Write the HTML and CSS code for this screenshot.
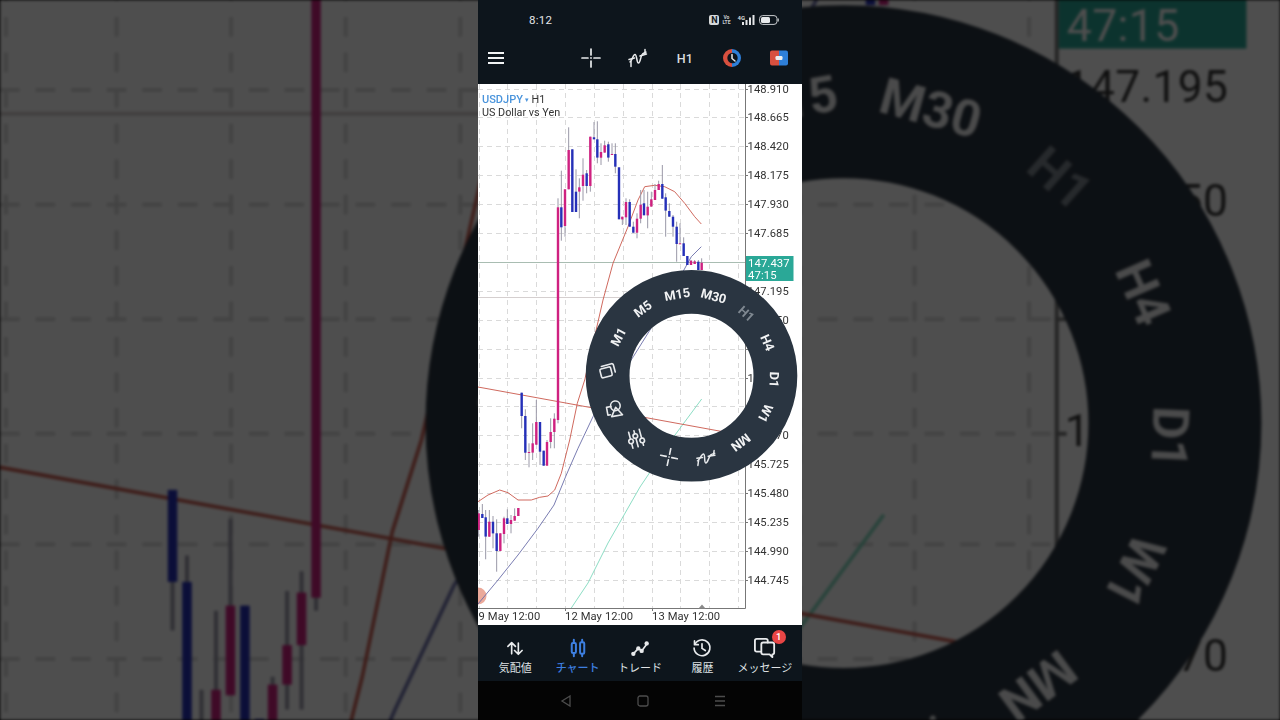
FILE: index.html
```html
<!DOCTYPE html>
<html lang="ja">
<head>
<meta charset="utf-8">
<title>USDJPY H1</title>
<link rel="stylesheet" href="styles.css">
</head>
<body>
<svg class="defs" width="0" height="0" aria-hidden="true">
  <symbol id="ico-cross" viewBox="0 0 20 20">
    <path class="ln" d="M10 1v6M10 13v6M1 10h6M13 10h6"/>
    <circle class="dot" cx="10" cy="10" r=".9"/>
  </symbol>
  <symbol id="ico-ind" viewBox="0 0 20 20">
    <path class="ln thin" d="M2 14c2-1 3-7.500 5-7.500s1.500 8.500 3.500 8.500 2-7.500 4-9l3.500-2"/>
    <path class="ln thin" d="M1 11.500l5.500-1.500M12 8l6.500-2M3 13.500v5M17 1.500v5"/>
  </symbol>
</svg>

<main class="stage">
  <svg class="backdrop" viewBox="478 268.7 324 182.25" aria-hidden="true"><use href="#scene"/></svg>

  <section class="phone">
    <header class="status">
      <span class="clock">8:12</span>
      <div class="status-icons">
        <span class="nfc">N</span>
        <span class="volte">Vo<br>LTE</span>
        <span class="net">4G</span>
        <svg class="bars" viewBox="0 0 13 10"><path d="M0 7h2v3H0zM3.500 5h2v5h-2zM7 2.500h2V10H7zM10.500 0h2v10h-2z"/></svg>
        <svg class="battery" viewBox="0 0 20 10"><rect class="batt-case" x=".6" y=".6" width="17.400" height="8.800" rx="3"/><rect class="batt-fill" x="2" y="2" width="9" height="6" rx="1.500"/><rect class="batt-tip" x="18.600" y="3.500" width="1.200" height="3"/></svg>
      </div>
    </header>

    <nav class="toolbar">
      <div class="burger"><i></i><i></i><i></i></div>
      <div class="tools">
        <svg class="tool"><use href="#ico-cross"/></svg>
        <svg class="tool"><use href="#ico-ind"/></svg>
        <span class="tf">H1</span>
        <svg class="tool" viewBox="0 0 20 20">
          <path class="f-red" d="M10 1a9 9 0 0 0 0 18z"/>
          <path class="f-blue" d="M10 1a9 9 0 0 1 0 18z"/>
          <circle class="f-dark" cx="10.500" cy="10" r="5.200"/>
          <path class="ln thin" d="M10 6.500v4l3 2.500"/>
        </svg>
        <svg class="tool" viewBox="0 0 20 20">
          <path class="f-red" d="M3 2.500h7v15H3a2 2 0 0 1-2-2v-11a2 2 0 0 1 2-2z"/>
          <path class="f-blue" d="M10 2.500h7a2 2 0 0 1 2 2v11a2 2 0 0 1-2 2h-7z"/>
          <rect class="f-white" x="6.500" y="8" width="7" height="4" rx="1.200"/>
        </svg>
      </div>
    </nav>

    <svg class="chart" viewBox="478 84 324 541">
      <g id="scene">
        <rect class="paper" x="478" y="84" width="324" height="541"/>
        <g id="grid"></g>
        <circle class="touch" cx="478" cy="596" r="8.500"/>
        <path class="hline hline-a" d="M478 262.500H745"/>
        <path class="hline hline-b" d="M478 297.500H745"/>
        <polyline class="ma red" points="478,501.700 488,495 499.700,490 508,492.700 518,500 531.300,500 539.700,497.300 548,496 554.700,490 561.300,473.300 569.700,440 577.300,403.300 584.700,380 603,300 613,263.300 628,226.700 638,200 644.700,186.700 654.700,185.300 664.700,186.700 674.700,191.700 684.700,203.300 694.700,216.700 701.300,224"/>
        <polyline class="ma blue" points="478,604 498,580 518,555 538,528.300 554,505 566.300,475 578,448.300 593,416.700 633.300,356.700 650,330 680,277 691.300,256.700 701.300,246.700"/>
        <polyline class="ma green" points="571.300,608 588,583 608,543 640,487 675,435 701.700,399"/>
        <path class="ma red" d="M478 387L722 431.500"/>
        <g id="candles"></g>
        <path class="axis" d="M745.500 84V608.500H478"/>
        <path class="marker" d="M698.500 608.500l3.500-4 3.500 4z"/>
        <g id="prices"></g>
        <rect class="tag" x="746" y="256" width="47.500" height="25"/>
        <text class="tag-text" x="748" y="266.500">147.437</text>
        <text class="tag-text" x="748" y="279">47:15</text>
        <text class="axis-text" x="478.500" y="620">9 May 12:00</text>
        <text class="axis-text" x="565" y="620">12 May 12:00</text>
        <text class="axis-text" x="652" y="620">13 May 12:00</text>
        <text class="symbol" x="482" y="102.500">USDJPY</text>
        <text class="caret" x="524.500" y="101.500">▾</text>
        <text class="head" x="531.500" y="102.500">H1</text>
        <text class="head" x="482" y="115.500">US Dollar vs Yen</text>

        <circle class="ring" cx="691.500" cy="375.800" r="83.900"/>
        <g class="ring-labels">
          <text x="691.500" y="297.500" transform="rotate(-62 691.500 375.800)">M1</text>
          <text x="691.500" y="297.500" transform="rotate(-36 691.500 375.800)">M5</text>
          <text x="691.500" y="297.500" transform="rotate(-10 691.500 375.800)">M15</text>
          <text x="691.500" y="297.500" transform="rotate(15.500 691.500 375.800)">M30</text>
          <text class="dim" x="691.500" y="297.500" transform="rotate(41.500 691.500 375.800)">H1</text>
          <text x="691.500" y="297.500" transform="rotate(66.500 691.500 375.800)">H4</text>
          <text x="691.500" y="297.500" transform="rotate(92.500 691.500 375.800)">D1</text>
          <text x="691.500" y="297.500" transform="rotate(117 691.500 375.800)">W1</text>
          <text x="691.500" y="297.500" transform="rotate(143.500 691.500 375.800)">MN</text>
        </g>
        <g transform="translate(607.500 372) rotate(-15)">
          <rect class="ln ring-ln" x="-7" y="-4.500" width="11" height="9" rx="1.500"/>
          <path class="ln ring-ln" d="M-4.500 -7H6a1.500 1.500 0 0 1 1.500 1.500V2"/>
        </g>
        <g transform="translate(614.500 409.500) rotate(-10)">
          <circle class="ln ring-ln" cx="1.500" cy="-3.500" r="4.800"/>
          <path class="ln ring-ln" d="M1.500 -2L7 6.500H-4z"/>
          <path class="ln ring-ln" d="M-3 -3.500H-7.500V4.500H-5"/>
        </g>
        <g transform="translate(636 438.500) rotate(-15)">
          <path class="ln ring-ln" d="M-5.500 -8V-1M-5.500 4V8.500M0 -8V-5M0 0V8.500M5.500 -8V1M5.500 6V8.500"/>
          <circle class="ln ring-ln" cx="-5.500" cy="1.500" r="2.300"/>
          <circle class="ln ring-ln" cx="0" cy="-2.500" r="2.300"/>
          <circle class="ln ring-ln" cx="5.500" cy="3.500" r="2.300"/>
        </g>
        <g transform="translate(669 457) rotate(12)"><use href="#ico-cross" x="-9.500" y="-9.500" width="19" height="19"/></g>
        <g transform="translate(706 458) rotate(8)"><use href="#ico-ind" x="-10" y="-10" width="20" height="20"/></g>
      </g>
    </svg>

    <nav class="tabs">
      <a class="tab">
        <svg class="tab-ico" viewBox="0 0 24 24"><path class="ln nav" d="M8 19V6M3.500 10L8 5.500l4.500 4.500M16 6v13M11.500 15l4.500 4.500 4.500-4.500"/></svg>
        <span>気配値</span>
      </a>
      <a class="tab active">
        <svg class="tab-ico" viewBox="0 0 24 24"><path class="ln act" d="M7 2v3M7 19v3M17 2v3M17 19v3"/><rect class="ln act" x="4.500" y="6" width="5" height="12" rx="1.500"/><rect class="ln act" x="14.500" y="5" width="5" height="14" rx="1.500"/></svg>
        <span>チャート</span>
      </a>
      <a class="tab">
        <svg class="tab-ico" viewBox="0 0 24 24"><path class="ln nav" d="M4 19l6-6.500 4 3 6-8"/><circle class="f-soft" cx="4" cy="19" r="2.600"/><circle class="f-soft" cx="10" cy="12.500" r="2.600"/><circle class="f-soft" cx="14" cy="15.500" r="2.600"/><circle class="f-soft" cx="20" cy="6.500" r="2.600"/></svg>
        <span>トレード</span>
      </a>
      <a class="tab">
        <svg class="tab-ico" viewBox="0 0 24 24"><path class="ln nav" d="M3.500 7.500A9.500 9.500 0 1 1 2.500 12"/><path class="ln nav" d="M3 3.500v4.500h4.500M12 7v5.500l4 2.500"/></svg>
        <span>履歴</span>
      </a>
      <a class="tab">
        <svg class="tab-ico msg" viewBox="0 0 24 24"><path class="ln nav" d="M15 6V4a2 2 0 0 0-2-2H3a2 2 0 0 0-2 2v10a2 2 0 0 0 2 2h4"/><path class="ln nav" d="M10 6h10a2 2 0 0 1 2 2v9a2 2 0 0 1-2 2v3l-3-3h-7a2 2 0 0 1-2-2V8a2 2 0 0 1 2-2z"/></svg>
        <span>メッセージ</span>
        <b class="badge">1</b>
      </a>
    </nav>

    <footer class="sysnav">
      <svg class="sys" viewBox="0 0 14 14"><path d="M11 2L3 7l8 5z"/></svg>
      <svg class="sys" viewBox="0 0 14 14"><rect x="2" y="2" width="10" height="10" rx="2"/></svg>
      <svg class="sys" viewBox="0 0 14 14"><path d="M2 2.500h10M2 7h10M2 11.500h10"/></svg>
    </footer>
  </section>
</main>
<script src="chart.js"></script>
</body>
</html>
```
FILE: styles.css
```css
* { box-sizing: border-box; }
html, body { margin: 0; height: 100%; background: #000; }
body { font-family: Roboto, "Noto Sans CJK JP", sans-serif; overflow: hidden; }
.defs { position: absolute; }

.stage { position: relative; display: flex; justify-content: center; height: 720px; overflow: hidden; background: #000; }
.backdrop { position: absolute; inset: 0; width: 1280px; height: 720px; opacity: .305; filter: blur(1.4px); }

.phone { position: relative; width: 324px; height: 720px; display: flex; flex-direction: column; background: #0d151c; }

.status { height: 40px; display: flex; align-items: center; justify-content: space-between; padding: 0 23px 0 51px; color: #e4e6e8; flex: none; }
.clock { font-size: 11.500px; letter-spacing: .3px; }
.status-icons { display: flex; align-items: center; gap: 2px; }
.nfc { width: 10px; height: 10px; border-radius: 2px; background: #d5d8da; color: #10181f; font-size: 9px; font-weight: 700; line-height: 10px; text-align: center; }
.volte { width: 10px; margin-right: 4px; font-size: 5px; line-height: 5px; color: #c9cccf; font-weight: 700; text-align: center; }
.net { font-size: 6px; font-weight: 700; color: #d5d8da; margin: -5px -5px 0 0; }
.bars { width: 13px; height: 10px; fill: #e4e6e8; }
.battery { width: 20px; height: 10px; margin-left: 2px; }
.batt-case { fill: none; stroke: #c9cccf; stroke-width: 1; }
.batt-fill { fill: #e8eaec; }
.batt-tip { fill: #c9cccf; }

.toolbar { height: 44px; display: flex; align-items: center; flex: none; padding: 0 13px 8px 10px; justify-content: space-between; }
.burger { width: 16px; display: flex; flex-direction: column; gap: 3px; }
.burger i { display: block; height: 2px; background: #f1f3f4; }
.tools { display: flex; align-items: center; gap: 27px; }
.tool { width: 20px; height: 20px; display: block; }
.tf { width: 20px; color: #d9dcdf; font-size: 12.500px; font-weight: 500; text-align: center; letter-spacing: .3px; }

.ln { fill: none; stroke: #e8eaec; stroke-width: 1.700; stroke-linecap: round; stroke-linejoin: round; }
.ln.thin { stroke-width: 1.500; }
.dot { fill: #e8eaec; }
.f-red { fill: #d8503f; }
.f-blue { fill: #2e7fd8; }
.f-dark { fill: #0d151c; }
.f-white { fill: #eceeef; }
.f-soft { fill: #e8eaec; }
.ln.nav { stroke-width: 2; }
.ln.act { stroke: #3d7fe0; stroke-width: 2.400; }
.ln.ring-ln { stroke-width: 1.600; }

.chart { display: block; width: 324px; height: 541px; flex: none; filter: blur(.3px); }
.paper { fill: #fff; }
.grid-line { stroke: #dadada; stroke-width: 1; stroke-dasharray: 5 4; fill: none; }
.touch { fill: #eba99a; }
.hline { fill: none; stroke-width: 1; }
.hline-a { stroke: #a9bdb2; }
.hline-b { stroke: #d5cfcf; }
.ma { fill: none; stroke-width: .9; stroke-linejoin: round; }
.ma.red { stroke: #c9584c; }
.ma.blue { stroke: #6a6da8; }
.ma.green { stroke: #7fd9bd; }
.wick { stroke: #9a98a8; stroke-width: 1; }
.body-up { fill: #cf2180; }
.body-down { fill: #2530b8; }
.axis { fill: none; stroke: #777; stroke-width: 1; }
.marker { fill: #8a8a8a; }
.price, .axis-text { font-size: 11.200px; fill: #333; letter-spacing: .1px; }
.tick { stroke: #777; stroke-width: 1; }
.tag { fill: #2aa897; }
.tag-text { font-size: 11.300px; fill: #fff; letter-spacing: .1px; }
.symbol { font-size: 11px; font-weight: 500; fill: #4a94dc; }
.caret { font-size: 7px; fill: #4a94dc; }
.head { font-size: 10.800px; fill: #333; }
.ring { fill: none; stroke: #2a3541; stroke-width: 43.800; }
.ring-labels text { font-size: 12.800px; font-weight: 700; fill: #f2f3f4; text-anchor: middle; }
.ring-labels .dim { fill: #7f8891; }

.tabs { height: 56px; flex: none; display: grid; grid-template-columns: repeat(5, 1fr); padding: 0 6px; background: #0d151c; }
.tab { position: relative; display: flex; flex-direction: column; align-items: center; padding-top: 13px; color: #dfe2e4; font-size: 11px; line-height: 16px; white-space: nowrap; }
.tab-ico { width: 20px; height: 20px; display: block; margin-bottom: 3px; }
.tab-ico.msg { width: 22px; height: 22px; margin: -1px 0 2px; }
.tab.active { color: #3d7fe0; font-weight: 500; }
.badge { position: absolute; top: 5px; left: 38px; width: 14px; height: 14px; border-radius: 50%; background: #e84545; color: #fff; font-size: 9.500px; font-weight: 500; line-height: 14px; text-align: center; }

.sysnav { flex: 1; background: #040404; display: flex; align-items: center; justify-content: space-between; padding: 0 75px 0 81px; }
.sys { width: 14px; height: 14px; fill: none; stroke: #4c4c4c; stroke-width: 1.300; }
```
FILE: chart.js
```js
// Builds the grid, price scale and candles of the chart from data.
const NS = 'http://www.w3.org/2000/svg';
function add(parent, tag, attrs, text) {
  const el = document.createElementNS(NS, tag);
  for (const k in attrs) el.setAttribute(k, attrs[k]);
  if (text) el.textContent = text;
  parent.appendChild(el);
}

const grid = document.getElementById('grid');
const prices = document.getElementById('prices');
for (let i = 0; i < 10; i++) {
  const x = Math.round(478.5 + 28.85 * i) + 0.5;
  add(grid, 'path', { class: 'grid-line', d: `M${x} 84V608` });
}
for (let i = 0; i < 18; i++) {
  const y = Math.round(88.5 + 28.9 * i) + 0.5;
  add(grid, 'path', { class: 'grid-line', d: `M478 ${y}H745` });
  add(prices, 'path', { class: 'tick', d: `M745 ${y}h3` });
  add(prices, 'text', { class: 'price', x: 747.5, y: y + 3 }, (148.91 - 0.245 * i).toFixed(3));
}
[565, 652].forEach(x => add(prices, 'path', { class: 'tick', d: `M${x}.5 608v3` }));

// [x, 'p'|'b', bodyTop, bodyBottom, wickTop, wickBottom], in crop coordinates
const groups = [
  { ox: 478, oy: 110, rows: [
    [240,'p',292,930,265,940],[250,'b',292,352,182,392],[261,'p',238,348,238,380],[272,'p',120,238,52,238],
    [283,'b',118,306,118,306],[294,'b',245,306,178,306],[304,'p',232,245,205,325],[315,'p',194,228,145,272],
    [326,'b',190,228,180,250],[337,'p',80,228,80,245],[348,'b',82,88,36,88],[358,'b',88,143,34,160],
    [369,'p',126,143,100,165],[380,'p',106,128,92,128],[391,'b',103,143,95,155],[402,'p',132,134,100,134],
    [412,'b',132,170,100,190],[423,'b',172,328,172,328],[433,'p',320,328,320,345],[444,'p',276,322,265,345],
    [455,'b',276,350,268,350],[466,'b',350,368,335,368],[477,'p',326,368,310,385],[488,'p',284,326,240,340],
    [498,'b',280,316,240,316],[509,'p',290,316,245,355],[520,'p',268,290,245,290],[531,'p',240,270,222,270],
    [542,'p',222,240,212,240],[553,'b',222,266,165,266],[563,'b',262,302,250,380],[574,'b',303,320,280,320],
    [585,'b',320,350,315,380],[596,'b',350,402,335,455],[606,'p',400,402,340,402],[617,'b',400,438,382,438],
    [628,'b',438,465,438,465],[639,'p',452,465,450,465],[650,'p',454,462,450,462],[661,'b',455,480,450,480],
    [671,'p',458,480,445,480]
  ]},
  { ox: 478, oy: 380, rows: [
    [2,'p',400,450,390,470],[13,'b',402,414,372,414],[23,'b',412,470,390,538],[34,'p',425,470,390,470],
    [45,'b',425,460,408,505],[56,'b',460,513,418,575],[67,'p',460,513,460,513],[78,'p',415,462,410,490],
    [88,'b',415,432,388,432],[99,'p',420,432,405,460],[110,'p',408,422,385,422],[121,'p',384,408,384,408],
    [131,'b',38,108,38,145],[142,'b',108,218,88,240],[153,'p',216,219,190,262],[164,'p',190,218,130,240],
    [175,'p',126,194,60,194],[186,'b',126,215,126,255],[197,'b',212,257,212,257],[207,'p',186,257,180,257],
    [218,'p',156,186,115,205],[229,'p',116,156,100,205]
  ]}
];
const candles = document.getElementById('candles');
groups.forEach(g => g.rows.forEach(([x, c, bt, bb, wt, wb]) => {
  const cx = (g.ox + x / 3).toFixed(2);
  add(candles, 'line', { class: 'wick', x1: cx, x2: cx, y1: (g.oy + wt / 3).toFixed(1), y2: (g.oy + wb / 3).toFixed(1) });
  add(candles, 'rect', {
    class: c === 'p' ? 'body-up' : 'body-down',
    x: (cx - 1.2).toFixed(2), width: 2.4,
    y: (g.oy + bt / 3).toFixed(1), height: Math.max((bb - bt) / 3, 1).toFixed(1)
  });
}));
```
